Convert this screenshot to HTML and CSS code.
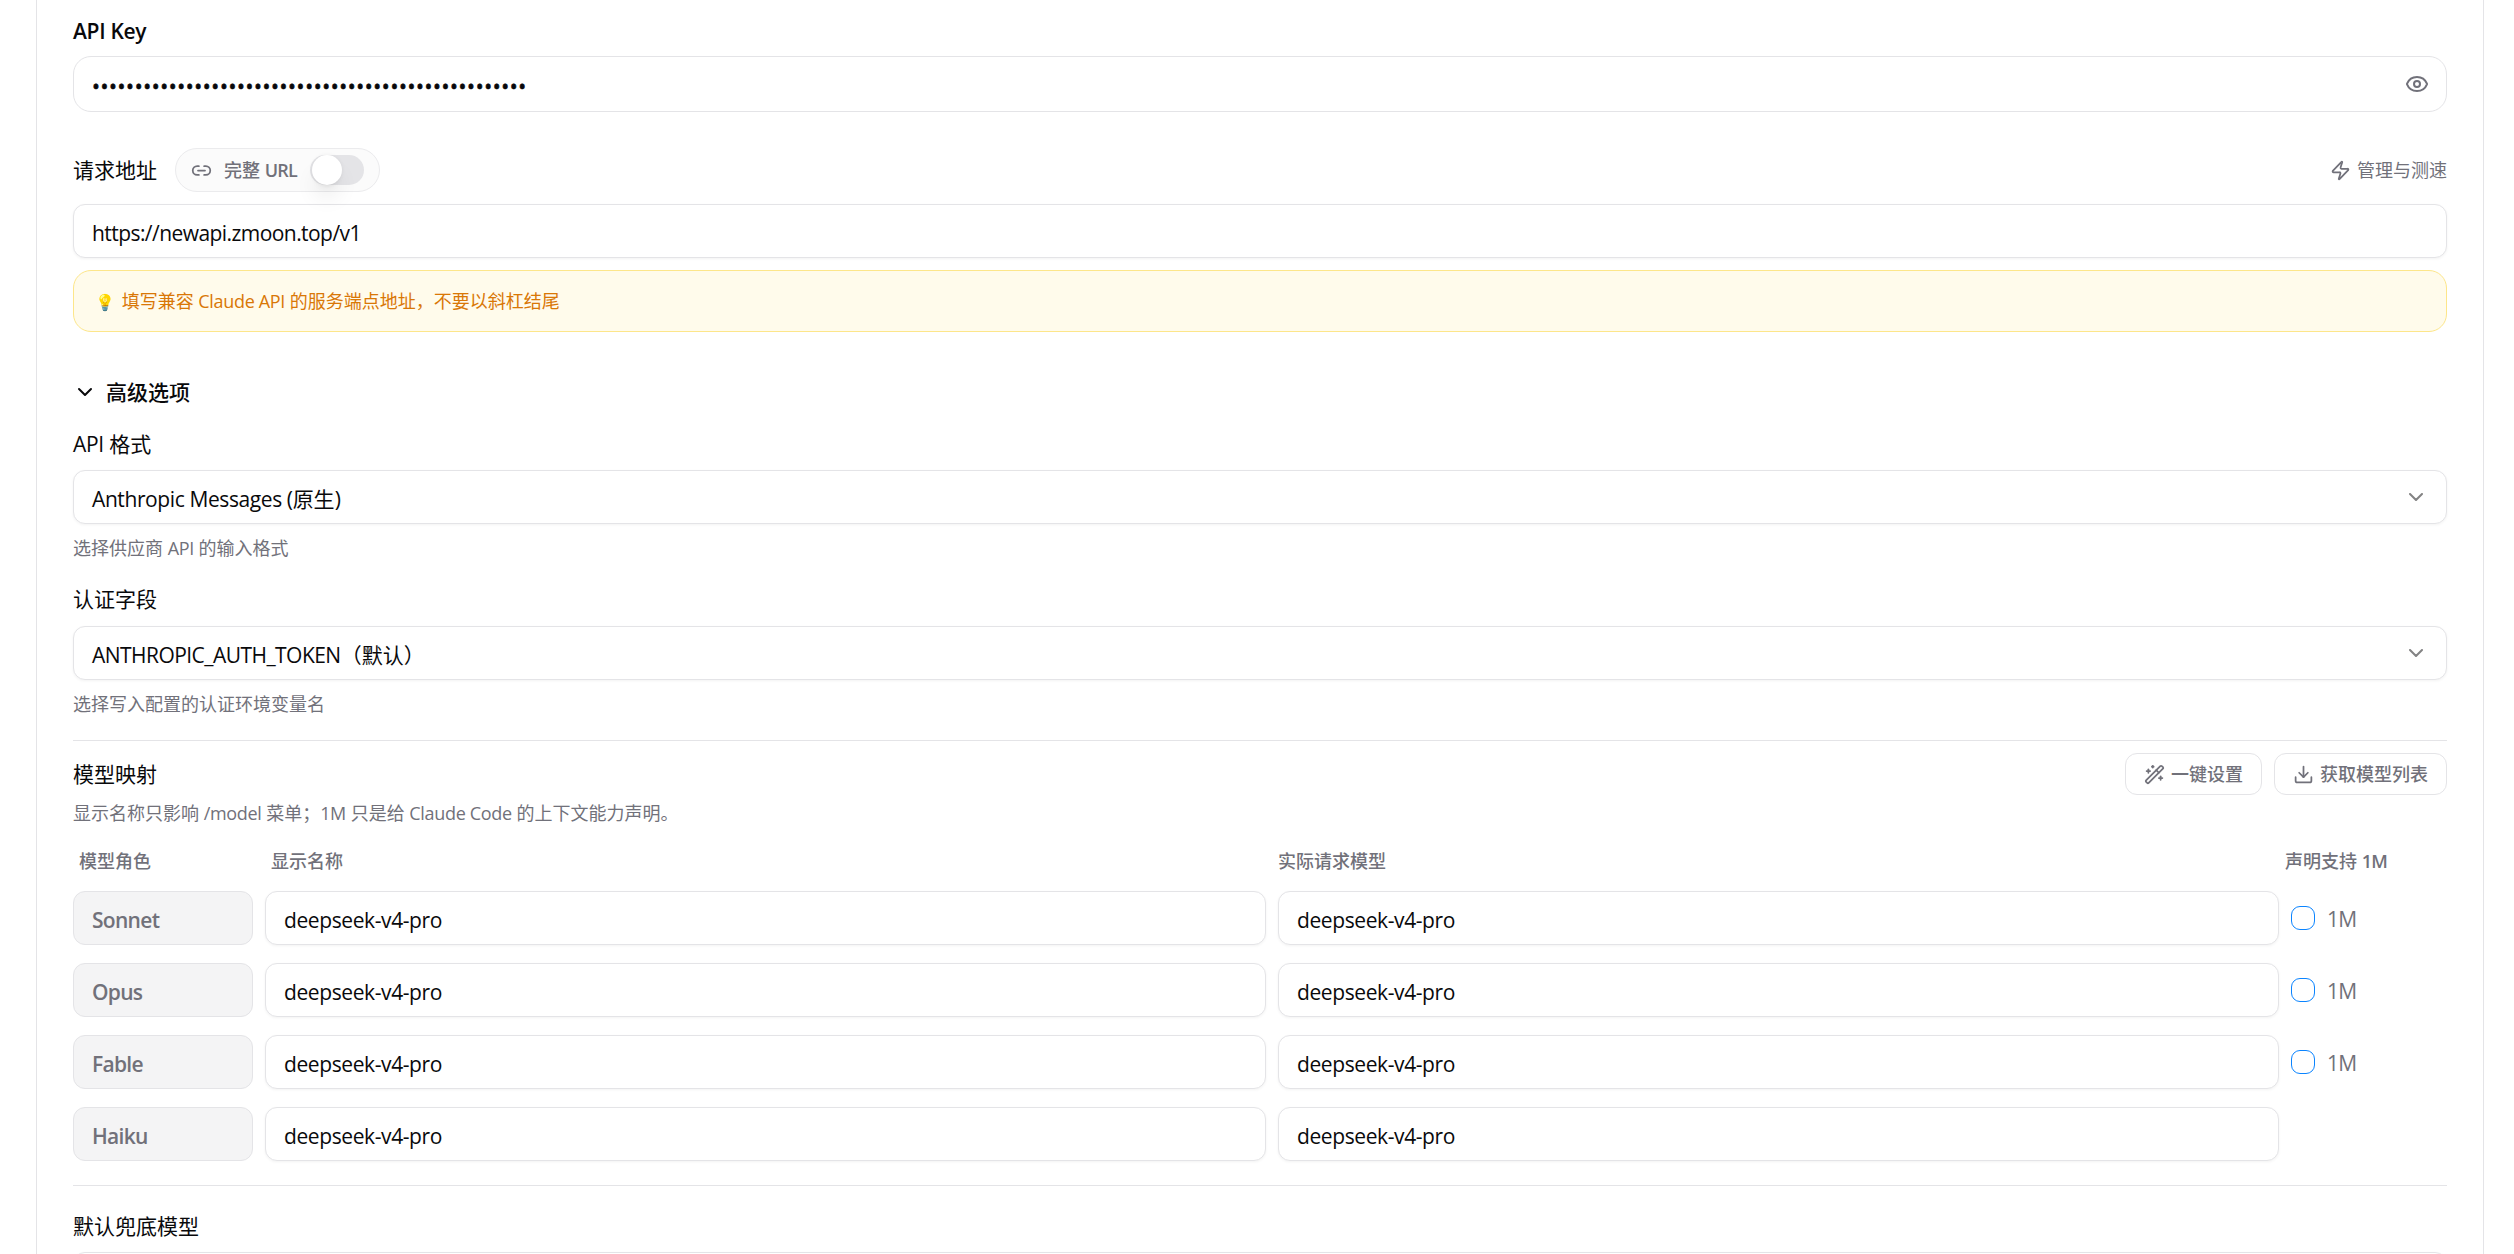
FILE: index.html
```html
<!DOCTYPE html>
<html lang="zh-CN">

<head>
    <meta charset="UTF-8">
    <meta name="viewport" content="width=device-width, initial-scale=1.0">
    <title>供应商配置</title>
    <link rel="stylesheet" href="styles.css">
</head>

<body>
    <div class="card">
        <!-- API Key -->
        <div class="label"><span class="en-key">API Key</span></div>
        <div class="input key-input">
            <span class="dots">•••••••••••••••••••••••••••••••••••••••••••••••••••</span>
            <svg class="icon eye" viewBox="0 0 24 24"><path d="M2.062 12.348a1 1 0 0 1 0-.696 10.75 10.75 0 0 1 19.876 0 1 1 0 0 1 0 .696 10.75 10.75 0 0 1-19.876 0"/><circle cx="12" cy="12" r="3"/></svg>
        </div>

        <!-- 请求地址 -->
        <div class="url-head">
            <div class="label">请求地址</div>
            <div class="pill">
                <svg class="icon small" viewBox="0 0 24 24"><path d="M9 17H7A5 5 0 0 1 7 7h2"/><path d="M15 7h2a5 5 0 1 1 0 10h-2"/><line x1="8" x2="16" y1="12" y2="12"/></svg>
                <span class="pill-text">完整 <span class="en-url">URL</span></span>
                <span class="switch"><span class="thumb"></span></span>
            </div>
            <div class="speed">
                <svg class="icon small" viewBox="0 0 24 24"><path d="M4 14a1 1 0 0 1-.78-1.63l9.9-10.2a.5.5 0 0 1 .86.46l-1.92 6.02A1 1 0 0 0 13 10h7a1 1 0 0 1 .78 1.63l-9.9 10.2a.5.5 0 0 1-.86-.46l1.92-6.02A1 1 0 0 0 11 14z"/></svg>
                <span>管理与测速</span>
            </div>
        </div>
        <div class="input"><span class="en-link">https://newapi.zmoon.top/v1</span></div>
        <div class="tip"><span class="bulb">💡</span> 填写兼容 <span class="en-sm">Claude API</span> 的服务端点地址，不要以斜杠结尾</div>

        <!-- 高级选项 -->
        <div class="advanced">
            <svg class="icon" viewBox="0 0 24 24"><path d="m6 9 6 6 6-6"/></svg>
            <span>高级选项</span>
        </div>
        <div class="label"><span class="en-sm">API</span> 格式</div>
        <div class="input select">
            <span><span class="en">Anthropic Messages (</span>原生<span class="en">)</span></span>
            <svg class="icon" viewBox="0 0 24 24"><path d="m6 9 6 6 6-6"/></svg>
        </div>
        <div class="help">选择供应商 <span class="en-sm">API</span> 的输入格式</div>

        <div class="label auth-label">认证字段</div>
        <div class="input select">
            <span><span class="en-token">ANTHROPIC_AUTH_TOKEN</span>（默认）</span>
            <svg class="icon" viewBox="0 0 24 24"><path d="m6 9 6 6 6-6"/></svg>
        </div>
        <div class="help">选择写入配置的认证环境变量名</div>

        <!-- 模型映射 -->
        <div class="mapping">
            <div class="mapping-head">
                <div class="label">模型映射</div>
                <div class="buttons">
                    <div class="btn">
                        <svg class="icon small" viewBox="0 0 24 24"><path d="m21.64 3.64-1.28-1.28a1.21 1.21 0 0 0-1.72 0L2.36 18.64a1.21 1.21 0 0 0 0 1.72l1.28 1.28a1.2 1.2 0 0 0 1.72 0L21.64 5.36a1.2 1.2 0 0 0 0-1.72"/><path d="m14 7 3 3"/><path d="M5 6v4"/><path d="M19 14v4"/><path d="M10 2v2"/><path d="M7 8H3"/><path d="M21 16h-4"/><path d="M11 3H9"/></svg>
                        一键设置
                    </div>
                    <div class="btn">
                        <svg class="icon small" viewBox="0 0 24 24"><path d="M21 15v4a2 2 0 0 1-2 2H5a2 2 0 0 1-2-2v-4"/><polyline points="7 10 12 15 17 10"/><line x1="12" x2="12" y1="15" y2="3"/></svg>
                        获取模型列表
                    </div>
                </div>
            </div>
            <div class="help">显示名称只影响 <span class="en-sm">/model</span> 菜单；<span class="en-sm">1M</span> 只是给 <span class="en-sm">Claude Code</span> 的上下文能力声明。</div>

            <div class="row thead">
                <div class="pad">模型角色</div>
                <div class="pad">显示名称</div>
                <div>实际请求模型</div>
                <div class="last">声明支持 <span class="en-url">1M</span></div>
            </div>
            <div class="row">
                <div class="input role"><span>Sonnet</span></div>
                <div class="input"><span class="en">deepseek-v4-pro</span></div>
                <div class="input"><span class="en">deepseek-v4-pro</span></div>
                <div class="check"><span class="box"></span><span class="en-1m">1M</span></div>
            </div>
            <div class="row">
                <div class="input role"><span>Opus</span></div>
                <div class="input"><span class="en">deepseek-v4-pro</span></div>
                <div class="input"><span class="en">deepseek-v4-pro</span></div>
                <div class="check"><span class="box"></span><span class="en-1m">1M</span></div>
            </div>
            <div class="row">
                <div class="input role"><span>Fable</span></div>
                <div class="input"><span class="en">deepseek-v4-pro</span></div>
                <div class="input"><span class="en">deepseek-v4-pro</span></div>
                <div class="check"><span class="box"></span><span class="en-1m">1M</span></div>
            </div>
            <div class="row">
                <div class="input role"><span>Haiku</span></div>
                <div class="input"><span class="en">deepseek-v4-pro</span></div>
                <div class="input"><span class="en">deepseek-v4-pro</span></div>
            </div>
        </div>

        <!-- 默认兜底模型 -->
        <div class="fallback">
            <div class="label">默认兜底模型</div>
            <div class="input"></div>
        </div>
    </div>
</body>

</html>
```
FILE: styles.css
```css
* {
    margin: 0;
    padding: 0;
    box-sizing: border-box;
}
body {
    height: 1254px;
    overflow: hidden;
    background-color: #fff;
    color: #09090b;
    font-family: "Open Sans", "Noto Sans CJK SC", sans-serif;
    font-size: 21px;
    line-height: 30px;
}
.card {
    width: 2448px;
    margin-left: 36px;
    padding: 16px 36px 0;
    border-left: 1px solid #e4e4e7;
    border-right: 1px solid #e4e4e7;
}

/* 西文字距 */
.en { letter-spacing: -0.4px; }
.en-sm { letter-spacing: -0.33px; }
.en-key {
    font-weight: 600;
    letter-spacing: -0.3px;
}
.en-link { letter-spacing: -0.56px; }
.en-token { letter-spacing: -0.54px; }
.en-url {
    font-weight: 600;
    letter-spacing: -0.8px;
}
.en-1m { letter-spacing: -0.8px; }

.label {
    height: 30px;
    margin-bottom: 10px;
    white-space: nowrap;
}

.input {
    display: flex;
    align-items: center;
    justify-content: space-between;
    height: 54px;
    padding: 3px 18px 0;
    border: 1px solid #e4e4e7;
    border-radius: 12px;
    background-color: #fff;
    box-shadow: 0 1px 3px rgba(0, 0, 0, 0.05);
    white-space: nowrap;
}
.key-input {
    height: 56px;
    border-radius: 18px;
    box-shadow: none;
}
.dots {
    letter-spacing: 0.63px;
    -webkit-text-stroke: 0.6px #09090b;
}

.icon {
    flex: none;
    width: 24px;
    height: 24px;
    fill: none;
    stroke: currentColor;
    stroke-width: 2;
    stroke-linecap: round;
    stroke-linejoin: round;
}
.small {
    width: 21px;
    height: 21px;
}
.eye {
    margin: -3px -1px 0 0;
    color: #71717a;
}

.url-head {
    display: flex;
    align-items: center;
    margin: 36px 0 12px;
    height: 44px;
}
.url-head .label { margin: 0 18px 0 0; }
.pill {
    display: flex;
    align-items: center;
    width: 205px;
    height: 44px;
    padding: 0 15px;
    border: 1px solid #ebebed;
    border-radius: 22px;
    background-color: #fbfbfb;
    color: #71717a;
    font-size: 18px;
    font-weight: 500;
}
.pill-text {
    flex: 1;
    margin-left: 12px;
    white-space: nowrap;
}
.switch {
    width: 54px;
    height: 30px;
    padding-left: 2px;
    border-radius: 15px;
    background-color: #e4e4e7;
}
.thumb {
    display: block;
    width: 30px;
    height: 30px;
    border-radius: 50%;
    background-color: #fff;
    box-shadow: 0 15px 22px -4px rgba(0, 0, 0, 0.1), 0 6px 9px -6px rgba(0, 0, 0, 0.1), 0 0 4px rgba(0, 0, 0, 0.06);
}
.speed {
    display: flex;
    align-items: center;
    gap: 6px;
    margin-left: auto;
    color: #71717a;
    font-size: 18px;
}

.tip {
    height: 62px;
    margin-top: 12px;
    padding: 0 18px;
    border: 1px solid #fde68a;
    border-radius: 18px;
    background-color: #fffbeb;
    color: #d97706;
    font-size: 18px;
    line-height: 61px;
}
.bulb {
    display: inline-block;
    width: 25px;
    font-size: 16px;
    text-align: center;
}

.advanced {
    display: flex;
    align-items: center;
    gap: 9px;
    height: 30px;
    margin: 45px 0 22px;
    font-weight: 500;
}
.advanced + .label { margin-bottom: 11px; }
.select .icon {
    margin-top: -3px;
    opacity: 0.5;
}
.help {
    height: 24px;
    margin-top: 12px;
    color: #71717a;
    font-size: 18px;
    line-height: 24px;
    white-space: nowrap;
}
.auth-label { margin: 24px 0 12px; }

.mapping {
    margin-top: 24px;
    padding-top: 12px;
    border-top: 1px solid #e4e4e7;
}
.mapping-head {
    display: flex;
    align-items: center;
    justify-content: space-between;
    height: 42px;
}
.mapping-head .label { margin: 0; }
.mapping .help { margin: 6px 0 24px; }
.buttons {
    display: flex;
    gap: 12px;
}
.btn {
    display: flex;
    align-items: center;
    gap: 6px;
    height: 42px;
    padding: 0 18px;
    border: 1px solid #e4e4e7;
    border-radius: 12px;
    color: #71717a;
    font-size: 18px;
    font-weight: 500;
}

.row {
    display: grid;
    grid-template-columns: 180px 1fr 1fr 156px;
    column-gap: 12px;
    margin-bottom: 18px;
}
.thead {
    margin-bottom: 18px;
    color: #71717a;
    font-size: 18px;
    font-weight: 500;
    line-height: 24px;
}
.pad { padding-left: 6px; }
.last { margin-left: -6px; }
.role {
    background-color: #f4f4f5;
    box-shadow: none;
    color: #71717a;
    font-weight: 600;
    letter-spacing: -0.7px;
}
.check {
    display: flex;
    align-items: center;
    gap: 12px;
    color: #71717a;
}
.en-1m { padding-top: 2px; }
.box {
    width: 24px;
    height: 24px;
    border: 1px solid #0a84ff;
    border-radius: 9px;
}

.fallback {
    margin-top: 24px;
    padding-top: 25px;
    border-top: 1px solid #e4e4e7;
}
.fallback .label { margin-bottom: 11px; }
```
